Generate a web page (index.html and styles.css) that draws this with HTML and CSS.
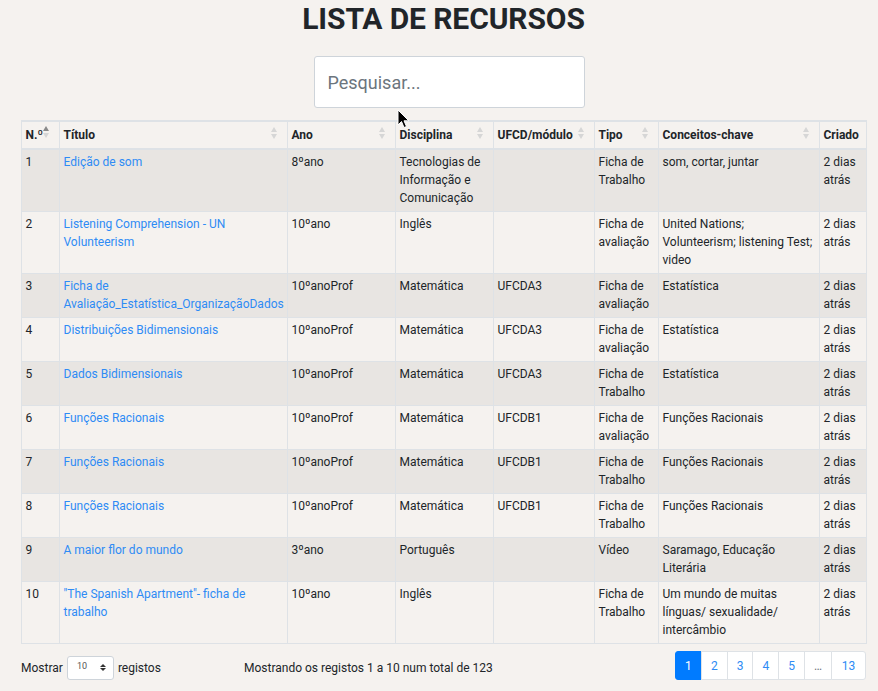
FILE: index.html
```html
<!DOCTYPE html>
<html lang="pt">
<head>
<meta charset="utf-8">
<title>Lista de Recursos</title>
<link rel="stylesheet" href="styles.css">
</head>
<body>
<div class="page">
  <h1 class="title">LISTA DE RECURSOS</h1>
  <div class="search-wrap">
    <input class="search" type="text" placeholder="Pesquisar...">
  </div>
  <table class="grid">
    <colgroup>
      <col style="width:38px"><col style="width:228px"><col style="width:108px"><col style="width:98px"><col style="width:101px"><col style="width:64px"><col style="width:161px"><col style="width:47px">
    </colgroup>
    <thead>
      <tr>
        <th class="sort asc">N.º</th>
        <th class="sort">Título</th>
        <th class="sort">Ano</th>
        <th class="sort">Disciplina</th>
        <th class="sort">UFCD/módulo</th>
        <th class="sort">Tipo</th>
        <th class="sort">Conceitos-chave</th>
        <th>Criado</th>
      </tr>
    </thead>
    <tbody>
      <tr><td>1</td><td><a href="#">Edição de som</a></td><td>8ºano</td><td>Tecnologias de Informação e Comunicação</td><td></td><td>Ficha de Trabalho</td><td>som, cortar, juntar</td><td>2 dias atrás</td></tr>
      <tr><td>2</td><td><a href="#">Listening Comprehension - UN Volunteerism</a></td><td>10ºano</td><td>Inglês</td><td></td><td>Ficha de avaliação</td><td>United Nations; Volunteerism; listening Test; video</td><td>2 dias atrás</td></tr>
      <tr><td>3</td><td><a href="#">Ficha de Avaliação_Estatística_OrganizaçãoDados</a></td><td>10ºanoProf</td><td>Matemática</td><td>UFCDA3</td><td>Ficha de avaliação</td><td>Estatística</td><td>2 dias atrás</td></tr>
      <tr><td>4</td><td><a href="#">Distribuições Bidimensionais</a></td><td>10ºanoProf</td><td>Matemática</td><td>UFCDA3</td><td>Ficha de avaliação</td><td>Estatística</td><td>2 dias atrás</td></tr>
      <tr><td>5</td><td><a href="#">Dados Bidimensionais</a></td><td>10ºanoProf</td><td>Matemática</td><td>UFCDA3</td><td>Ficha de Trabalho</td><td>Estatística</td><td>2 dias atrás</td></tr>
      <tr><td>6</td><td><a href="#">Funções Racionais</a></td><td>10ºanoProf</td><td>Matemática</td><td>UFCDB1</td><td>Ficha de avaliação</td><td>Funções Racionais</td><td>2 dias atrás</td></tr>
      <tr><td>7</td><td><a href="#">Funções Racionais</a></td><td>10ºanoProf</td><td>Matemática</td><td>UFCDB1</td><td>Ficha de Trabalho</td><td>Funções Racionais</td><td>2 dias atrás</td></tr>
      <tr><td>8</td><td><a href="#">Funções Racionais</a></td><td>10ºanoProf</td><td>Matemática</td><td>UFCDB1</td><td>Ficha de Trabalho</td><td>Funções Racionais</td><td>2 dias atrás</td></tr>
      <tr><td>9</td><td><a href="#">A maior flor do mundo</a></td><td>3ºano</td><td>Português</td><td></td><td>Vídeo</td><td>Saramago, Educação Literária</td><td>2 dias atrás</td></tr>
      <tr><td>10</td><td><a href="#">"The Spanish Apartment"- ficha de trabalho</a></td><td>10ºano</td><td>Inglês</td><td></td><td>Ficha de Trabalho</td><td>Um mundo de muitas línguas/ sexualidade/ intercâmbio</td><td>2 dias atrás</td></tr>
    </tbody>
  </table>
  <div class="footer">
    <div class="length">
      <span>Mostrar</span>
      <span class="select"><span class="sel-val">10</span><span class="sel-arrows"><i class="up"></i><i class="down"></i></span></span>
      <span>registos</span>
    </div>
    <div class="info">Mostrando os registos 1 a 10 num total de 123</div>
    <ul class="pager">
      <li class="active">1</li>
      <li>2</li>
      <li>3</li>
      <li>4</li>
      <li>5</li>
      <li class="dots">…</li>
      <li>13</li>
    </ul>
  </div>
</div>
<svg class="cursor" width="13" height="20" viewBox="0 0 13 20"><path d="M1 1 L1 16 L4.5 12.5 L7 18.5 L9.5 17.5 L7 11.8 L11.8 11.8 Z" fill="#000" stroke="#fff" stroke-width="1"/></svg>
</body>
</html>
```

FILE: styles.css
```css
html, body {
  margin: 0;
  padding: 0;
  background: #f5f2ef;
}
body {
  font-family: Roboto, "Liberation Sans", Arial, sans-serif;
  color: #212529;
  font-size: 12px;
  line-height: 18px;
  position: relative;
}
.page {
  width: 845px;
  margin-left: 21px;
  display: flex;
  flex-direction: column;
}
.title {
  margin: 1px 0 0;
  font-size: 30px;
  line-height: 36px;
  font-weight: 700;
  text-align: center;
  letter-spacing: -0.1px;
}
.search-wrap {
  display: flex;
  justify-content: center;
  padding-left: 11px;
  margin-top: 19px;
}
.search {
  width: 271px;
  height: 52px;
  box-sizing: border-box;
  border: 1px solid #ced4da;
  border-radius: 3px;
  background: #fff;
  padding: 0 13px;
  font-family: Roboto, "Liberation Sans", Arial, sans-serif;
  font-size: 18px;
  color: #495057;
  outline: none;
}
.search::placeholder {
  color: #6c757d;
}
.grid {
  margin-top: 12px;
  width: 845px;
  table-layout: fixed;
  border-collapse: collapse;
  border-top: 2px solid #dee2e6;
}
.grid th, .grid td {
  border: 1px solid #dee2e6;
  padding: 3px 4px 4px 3.5px;
  vertical-align: top;
  text-align: left;
}
.grid thead th {
  font-weight: 700;
  border-bottom: 2px solid #dee2e6;
  position: relative;
  white-space: nowrap;
  padding-top: 4px;
}
.grid tbody tr:nth-child(odd) {
  background: #e8e5e2;
}
.grid a {
  color: #2e8bf5;
  text-decoration: none;
}
.sort::before, .sort::after {
  content: "";
  position: absolute;
  right: 10px;
  width: 0;
  height: 0;
  border-left: 3px solid transparent;
  border-right: 3px solid transparent;
}
.sort::before {
  top: 5px;
  border-bottom: 5px solid #d6d6d6;
}
.sort::after {
  top: 12px;
  border-top: 5px solid #d6d6d6;
}
.sort.asc::before {
  border-bottom-color: #8a8a8a;
  top: 4px;
}
.sort.asc::after {
  top: 11px;
}
.footer {
  display: flex;
  align-items: center;
  margin-top: 7px;
}
.length {
  width: 223px;
  display: flex;
  align-items: center;
  gap: 4px;
  padding-top: 4px;
}
.select {
  display: inline-flex;
  align-items: center;
  justify-content: space-between;
  width: 47px;
  height: 24px;
  box-sizing: border-box;
  border: 1px solid #ced4da;
  border-radius: 3px;
  background: #fff;
  padding: 0 7px 0 9px;
}
.sel-val {
  font-size: 9px;
  color: #555;
  line-height: 10px;
  margin-top: -3px;
}
.sel-arrows {
  display: flex;
  flex-direction: column;
  gap: 1px;
}
.sel-arrows i {
  display: block;
  width: 0;
  height: 0;
  border-left: 3px solid transparent;
  border-right: 3px solid transparent;
}
.sel-arrows .up { border-bottom: 3px solid #333; }
.sel-arrows .down { border-top: 3px solid #333; }
.info {
  padding-top: 5px;
}
.pager {
  list-style: none;
  margin: 0 0 0 auto;
  padding: 0;
  display: flex;
}
.pager li {
  box-sizing: border-box;
  height: 29px;
  min-width: 26px;
  padding: 5px 9px;
  border: 1px solid #dee2e6;
  margin-left: -1px;
  background: #fff;
  color: #2e8bf5;
  text-align: center;
  line-height: 18px;
}
.pager li:first-child {
  border-radius: 3px 0 0 3px;
  margin-left: 0;
}
.pager li:last-child {
  border-radius: 0 3px 3px 0;
  min-width: 35px;
}
.pager li.active {
  background: #007bff;
  border-color: #007bff;
  color: #fff;
  min-width: 27px;
}
.pager li.dots {
  color: #6c757d;
}
.cursor {
  position: absolute;
  left: 397px;
  top: 109px;
}
```
